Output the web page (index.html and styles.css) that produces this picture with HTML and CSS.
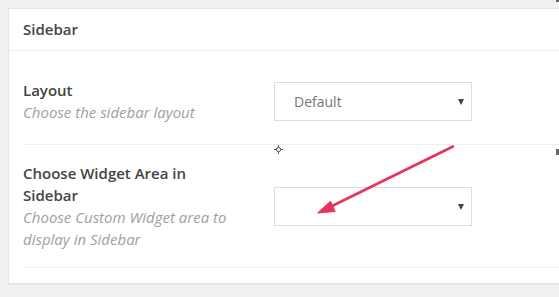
FILE: index.html
```html
<!DOCTYPE html>
<html lang="en">
<head>
    <meta charset="UTF-8">
    <meta name="viewport" content="width=device-width, initial-scale=1.0">
    <title>Sidebar</title>
    <link rel="stylesheet" href="styles.css">
</head>
<body>
    <div class="metabox">
        <div class="metabox-header">
            <h2>Sidebar</h2>
        </div>
        <div class="fields">
            <div class="field">
                <div class="field-label">
                    <label>Layout</label>
                    <p class="description">Choose the sidebar layout</p>
                </div>
                <div class="select-box">
                    <span class="select-value">Default</span>
                </div>
            </div>
            <div class="field">
                <div class="field-label">
                    <label>Choose Widget Area in Sidebar</label>
                    <p class="description">Choose Custom Widget area to display in Sidebar</p>
                </div>
                <div class="select-box">
                    <span class="select-value"></span>
                </div>
            </div>
        </div>
    </div>

    <!-- cursor and annotation drawn over the page -->
    <svg class="crosshair" width="9" height="9" viewBox="0 0 9 9">
        <path d="M4.5 0v9M0 4.5h9" stroke="#555" stroke-width="1"/>
        <circle cx="4.5" cy="4.5" r="2.2" fill="#fff" stroke="#555" stroke-width="1"/>
    </svg>
    <span class="edge-mark edge-mark-top"></span>
    <span class="edge-mark edge-mark-mid"></span>
    <svg class="annotation" width="559" height="297" viewBox="0 0 559 297">
        <line x1="453" y1="146.5" x2="327" y2="208.5" stroke="#e8345d" stroke-width="2.6" stroke-linecap="round"/>
        <path d="M318 213 L330.5 201.5 L335 211.5 Z" fill="#e8345d" stroke="#e8345d" stroke-width="1.2" stroke-linejoin="round"/>
    </svg>
</body>
</html>
```

FILE: styles.css
```css
html, body {
    margin: 0;
    padding: 0;
}
body {
    background-color: #f1f1f1;
    font-family: 'Open Sans', 'Noto Sans', sans-serif;
    font-size: 15px;
    color: #444;
    padding: 8px 0 0 8px;
    height: 297px;
    box-sizing: border-box;
    overflow: hidden;
    position: relative;
}
.metabox {
    width: 640px;
    background-color: #fff;
    border: 1px solid #e5e5e5;
    box-shadow: 0 1px 1px rgba(0, 0, 0, 0.04);
    padding-bottom: 15px;
}
.metabox-header {
    border-bottom: 1px solid #eee;
    padding: 0 14px;
}
.metabox-header h2 {
    margin: 0;
    font-size: 15px;
    font-weight: 600;
    line-height: 41px;
    color: #444;
}
.fields {
    margin-left: 14px;
    padding-top: 11px;
}
.field {
    display: grid;
    grid-template-columns: 210px 198px;
    column-gap: 41px;
    align-items: center;
    padding: 17px 0;
    border-bottom: 1px solid #eee;
}
.field:first-child {
    padding-bottom: 21px;
}
.field-label label {
    display: block;
    font-weight: 600;
    line-height: 22px;
    color: #444;
}
.description {
    margin: 0;
    font-style: italic;
    line-height: 22px;
    color: #a0a0a0;
}
.select-box {
    position: relative;
    height: 39px;
    box-sizing: border-box;
    border: 1px solid #ddd;
    display: flex;
    align-items: center;
    padding-left: 19px;
    font-size: 14px;
    color: #777;
}
.select-box::after {
    content: "";
    position: absolute;
    right: 7px;
    top: 16px;
    border-left: 3.5px solid transparent;
    border-right: 3.5px solid transparent;
    border-top: 6px solid #444;
}
.crosshair {
    position: absolute;
    left: 274px;
    top: 145px;
}
.edge-mark {
    position: absolute;
    width: 3px;
    background-color: #666;
}
.edge-mark-top {
    left: 556px;
    top: 0;
    height: 2px;
}
.edge-mark-mid {
    left: 556px;
    top: 149px;
    height: 6px;
}
.annotation {
    position: absolute;
    left: 0;
    top: 0;
    pointer-events: none;
}
```
